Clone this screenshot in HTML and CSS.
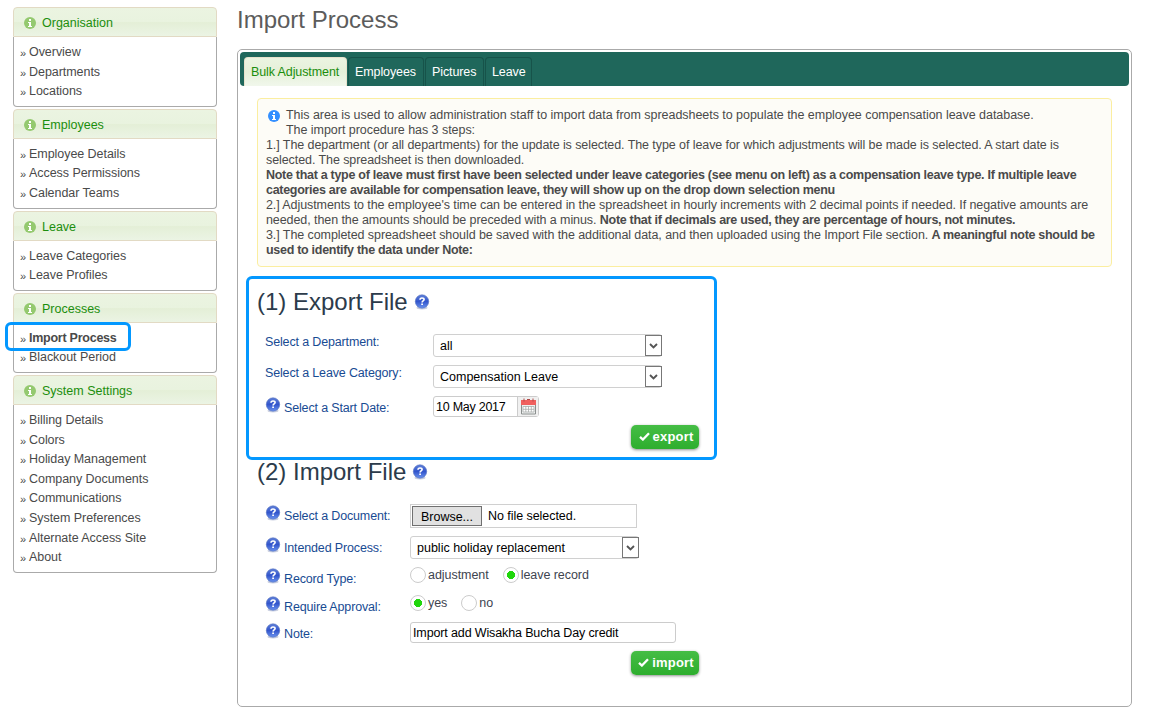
FILE: index.html
```html
<!DOCTYPE html>
<html lang="en">
<head>
  <meta charset="UTF-8">
  <meta name="viewport" content="width=device-width, initial-scale=1.0">
  <title>Import Process</title>
  <link rel="stylesheet" href="styles.css">
</head>
<body>
  <!-- Shared icons -->
  <svg class="sprite" width="0" height="0">
    <defs>
      <linearGradient id="helpFill" x1="0" y1="0" x2="0" y2="1">
        <stop offset="0" stop-color="#5f80d8"/>
        <stop offset="0.5" stop-color="#3255cc"/>
        <stop offset="1" stop-color="#6b93ee"/>
      </linearGradient>
    </defs>
    <symbol id="info" viewBox="0 0 12 12">
      <circle cx="6" cy="6" r="6" fill="currentColor"/>
      <path d="M5 2h2v2H5zM4 5h3v4h1v1H4V9h1V6H4z" fill="#fff"/>
    </symbol>
    <symbol id="help" viewBox="0 0 16 16">
      <ellipse cx="8" cy="13.8" rx="5.5" ry="1.7" fill="#c9cfe0"/>
      <circle cx="8" cy="7.5" r="6.7" fill="url(#helpFill)" stroke="#5470c0" stroke-width=".6"/>
      <path d="M6 5.800C6 4.500 6.900 4 8 4C9.300 4 10.100 4.700 10.100 5.600C10.100 6.900 8.100 7 8.100 8.400" fill="none" stroke="#fff" stroke-width="1.600"/>
      <path d="M7.200 9.400h1.800v1.700H7.200z" fill="#fff"/>
    </symbol>
    <symbol id="check" viewBox="0 0 11 9">
      <path d="M1 4.800L3.900 7.500L10 1.200" fill="none" stroke="#fff" stroke-width="2.300"/>
    </symbol>
    <symbol id="arrow" viewBox="0 0 9 6">
      <path d="M1 1L4.500 4.400L8 1" fill="none" stroke="#555" stroke-width="1.900"/>
    </symbol>
  </svg>

  <aside class="sidebar">
    <div class="menu">
      <h3><svg><use href="#info"/></svg>Organisation</h3>
      <ul>
        <li><a href="#">Overview</a></li>
        <li><a href="#">Departments</a></li>
        <li><a href="#">Locations</a></li>
      </ul>
    </div>
    <div class="menu">
      <h3><svg><use href="#info"/></svg>Employees</h3>
      <ul>
        <li><a href="#">Employee Details</a></li>
        <li><a href="#">Access Permissions</a></li>
        <li><a href="#">Calendar Teams</a></li>
      </ul>
    </div>
    <div class="menu">
      <h3><svg><use href="#info"/></svg>Leave</h3>
      <ul>
        <li><a href="#">Leave Categories</a></li>
        <li><a href="#">Leave Profiles</a></li>
      </ul>
    </div>
    <div class="menu">
      <h3><svg><use href="#info"/></svg>Processes</h3>
      <ul>
        <li class="current"><a href="#">Import Process</a></li>
        <li><a href="#">Blackout Period</a></li>
      </ul>
    </div>
    <div class="menu">
      <h3><svg><use href="#info"/></svg>System Settings</h3>
      <ul>
        <li><a href="#">Billing Details</a></li>
        <li><a href="#">Colors</a></li>
        <li><a href="#">Holiday Management</a></li>
        <li><a href="#">Company Documents</a></li>
        <li><a href="#">Communications</a></li>
        <li><a href="#">System Preferences</a></li>
        <li><a href="#">Alternate Access Site</a></li>
        <li><a href="#">About</a></li>
      </ul>
    </div>
  </aside>

  <main>
    <h1>Import Process</h1>

    <div class="panel">
      <nav class="tabs">
        <a href="#" class="tab active">Bulk Adjustment</a>
        <a href="#" class="tab">Employees</a>
        <a href="#" class="tab">Pictures</a>
        <a href="#" class="tab">Leave</a>
      </nav>

      <div class="note">
        <div class="intro">
          <svg><use href="#info"/></svg>
          <p>This area is used to allow administration staff to import data from spreadsheets to populate the employee compensation leave database.<br>
          The import procedure has 3 steps:</p>
        </div>
        <p>1.] The department (or all departments) for the update is selected. The type of leave for which adjustments will be made is selected. A start date is<br>
        selected. The spreadsheet is then downloaded.<br>
        <b>Note that a type of leave must first have been selected under leave categories (see menu on left) as a compensation leave type. If multiple leave<br>
        categories are available for compensation leave, they will show up on the drop down selection menu</b><br>
        2.] Adjustments to the employee's time can be entered in the spreadsheet in hourly increments with 2 decimal points if needed. If negative amounts are<br>
        needed, then the amounts should be preceded with a minus. <b>Note that if decimals are used, they are percentage of hours, not minutes.</b><br>
        3.] The completed spreadsheet should be saved with the additional data, and then uploaded using the Import File section. <b>A meaningful note should be<br>
        used to identify the data under Note:</b></p>
      </div>

      <section class="export">
        <h2>(1) Export File <svg><use href="#help"/></svg></h2>
        <div class="row">
          <label>Select a Department:</label>
          <div class="select"><select><option>all</option></select><span><svg><use href="#arrow"/></svg></span></div>
        </div>
        <div class="row">
          <label>Select a Leave Category:</label>
          <div class="select"><select><option>Compensation Leave</option></select><span><svg><use href="#arrow"/></svg></span></div>
        </div>
        <div class="row date-row">
          <label class="with-help"><svg><use href="#help"/></svg>Select a Start Date:</label>
          <div class="date">
            <input type="text" value="10 May 2017">
            <button type="button">
              <svg viewBox="0 0 15 17">
                <path d="M.5 3h14v13H.5z" fill="#eef1f0" stroke="#8b8f8e"/>
                <path d="M0 2h15v5H0z" fill="#f0605e"/>
                <path d="M3 .5v3M6 1.500h3M12 .5v3" stroke="#b04a48" fill="none"/>
                <path d="M2 8.500h11v5.500H2z" fill="#fff" stroke="#a9adac" stroke-width=".8"/>
                <path d="M4.800 8v6M7.500 8v6M10.300 8v6M2 11.300h11" stroke="#a9adac" stroke-width=".8"/>
              </svg>
            </button>
          </div>
        </div>
        <div class="actions"><button type="button" class="btn"><svg><use href="#check"/></svg>export</button></div>
      </section>

      <section class="import">
        <h2>(2) Import File <svg><use href="#help"/></svg></h2>
        <div class="row">
          <label class="with-help"><svg><use href="#help"/></svg>Select a Document:</label>
          <div class="file"><button type="button">Browse...</button>No file selected.</div>
        </div>
        <div class="row">
          <label class="with-help"><svg><use href="#help"/></svg>Intended Process:</label>
          <div class="select"><select><option>public holiday replacement</option></select><span><svg><use href="#arrow"/></svg></span></div>
        </div>
        <div class="row short">
          <label class="with-help"><svg><use href="#help"/></svg>Record Type:</label>
          <div class="radios">
            <label><input type="radio" name="record">adjustment</label>
            <label><input type="radio" name="record" checked>leave record</label>
          </div>
        </div>
        <div class="row short">
          <label class="with-help"><svg><use href="#help"/></svg>Require Approval:</label>
          <div class="radios">
            <label><input type="radio" name="approval" checked>yes</label>
            <label><input type="radio" name="approval">no</label>
          </div>
        </div>
        <div class="row">
          <label class="with-help"><svg><use href="#help"/></svg>Note:</label>
          <input type="text" class="text" value="Import add Wisakha Bucha Day credit">
        </div>
        <div class="actions"><button type="button" class="btn"><svg><use href="#check"/></svg>import</button></div>
      </section>
    </div>
  </main>
</body>
</html>
```
FILE: styles.css
```css
*, *::before, *::after { margin: 0; padding: 0; box-sizing: border-box; }

body {
  display: flex;
  gap: 20px;
  height: 726px;
  padding: 7px 21px 0 13px;
  overflow: hidden;
  background: #fff;
  color: #4a4a4a;
  font-family: "Liberation Sans", Arial, sans-serif;
  font-size: 12.5px;
}

.sprite { position: absolute; }

svg { display: block; }

a { color: inherit; text-decoration: none; }

ul { list-style: none; }

input, select, button {
  font: inherit;
  color: #000;
}

/* Sidebar */
.sidebar {
  width: 204px;
  flex: none;
}

.menu {
  margin-bottom: 2px;
}

.menu h3 {
  display: flex;
  align-items: center;
  height: 30px;
  padding: 2px 0 0 10px;
  border: 1px solid #e2dac4;
  border-radius: 4px 4px 0 0;
  background: linear-gradient(#ebf4e1 0%, #e9f3df 48%, #e4efd7 52%, #ebf4e4 100%);
  color: #1b8e0d;
  font-size: 12.5px;
  font-weight: normal;
}

.menu h3 svg {
  width: 12px;
  height: 12px;
  margin-right: 6px;
  color: #94c96f;
}

.menu ul {
  padding: 6px 0 5px 6px;
  border: 1px solid #aaa;
  border-top: 0;
  border-radius: 0 0 4px 4px;
}

.menu li {
  position: relative;
  height: 19.6px;
  line-height: 19.6px;
  letter-spacing: -0.05px;
}

.menu li:last-child { margin-bottom: -1px; }

.menu li::before {
  content: "»";
  display: inline-block;
  width: 9px;
  font-size: 11px;
  line-height: 12px;
  vertical-align: -1px;
}

.menu .current {
  font-weight: bold;
  letter-spacing: -0.25px;
}

.menu .current::before { font-weight: normal; }

/* ring around the current page */
.menu .current::after {
  content: "";
  position: absolute;
  left: -15px;
  top: -7px;
  width: 126px;
  height: 29px;
  border: 3px solid #0398ff;
  border-radius: 6px;
}

/* Main area */
main { width: 895px; }

h1 {
  height: 42px;
  line-height: 26px;
  color: #5c5c5c;
  font-size: 24px;
  font-weight: normal;
}

.panel {
  height: 658px;
  padding: 2px;
  border: 1px solid #aaa;
  border-radius: 5px;
}

.tabs {
  display: flex;
  gap: 1px;
  height: 34px;
  padding: 5px 4px 0;
  border-radius: 4px;
  background: #1f675b;
}

.tab {
  height: 29px;
  padding: 0 6px;
  border: 1px solid #17534a;
  border-bottom: 0;
  border-radius: 4px 4px 0 0;
  color: #fff;
  letter-spacing: -0.1px;
  line-height: 28px;
  white-space: nowrap;
}

.tab:nth-child(1) { width: 103px; }
.tab:nth-child(2) { width: 76px; }
.tab:nth-child(3) { width: 59px; }
.tab:nth-child(4) { width: 47px; }

.tab.active {
  border-color: #e8e2cc;
  background: linear-gradient(#ebf4e1, #e6f0d9 50%, #f1f7ec);
  color: #1b8e0d;
}

.note {
  height: 169px;
  margin: 12px 17px 9px;
  padding: 9px 8px 7px;
  border: 1px solid #fbeea0;
  border-radius: 4px;
  background: #fdfcf7;
  letter-spacing: -0.08px;
  line-height: 15px;
  white-space: nowrap;
}

.intro {
  display: flex;
  gap: 6px;
  letter-spacing: -0.04px;
}

.intro svg {
  width: 12px;
  height: 12px;
  margin: 2px 0 0 2px;
  color: #338fff;
}

.note b { letter-spacing: -0.29px; }

/* Forms */
section {
  width: 471px;
  margin-left: 6px;
  border: 3px solid transparent;
}

.export {
  height: 184px;
  border-color: #0398ff;
  border-radius: 6px;
}

.import { border-top: 0; }

h2 {
  display: flex;
  align-items: center;
  gap: 6px;
  height: 52px;
  padding: 0 0 6px 8px;
  color: #2c3b4b;
  font-size: 24px;
  font-weight: normal;
}

.import h2 {
  height: 41px;
  padding-bottom: 17px;
}

h2 svg,
.with-help svg {
  width: 16px;
  height: 16px;
}

.row {
  display: flex;
  height: 31px;
  padding: 3px 0 0 16px;
}

.row > label {
  width: 168px;
  height: 16px;
  color: #184b93;
  letter-spacing: -0.15px;
  line-height: 16px;
}

.import .row { height: 32px; }
.import .row > label { width: 145px; }
.import .row:nth-of-type(2) { height: 31px; }
.import .short { height: 28px; }
.import .row.short + .short { height: 27px; }

.row > .with-help {
  display: flex;
  gap: 3px;
  padding-top: 4px;
}

.with-help svg { margin-top: -3px; }

.select {
  display: flex;
  width: 229px;
  height: 23px;
  border: 1px solid #d0d0d0;
  border-radius: 3px;
}

.select select {
  flex: 1;
  padding-left: 6px;
  border: 0;
  background: none;
  appearance: none;
}

.select span {
  display: flex;
  align-items: center;
  justify-content: center;
  width: 17px;
  height: 21px;
  margin-right: -1px;
  border: 1px solid #777;
}

.select span svg {
  width: 9px;
  height: 6px;
}

.date {
  display: flex;
  width: 106px;
  height: 21px;
  border: 1px solid #ccc;
  border-radius: 3px;
}

.date input {
  width: 83px;
  padding-left: 2px;
  border: 0;
  background: none;
  letter-spacing: -0.25px;
}

.date button {
  display: flex;
  flex: 1;
  align-items: center;
  justify-content: center;
  border: 0;
  border-left: 1px solid #ccc;
  background: #f0f0f0;
}

.date button svg {
  width: 15px;
  height: 17px;
}

.file {
  display: flex;
  align-items: center;
  gap: 6px;
  width: 227px;
  height: 24px;
  padding: 1px;
  border: 1px solid #d0d0d0;
  color: #000;
  letter-spacing: -0.05px;
  line-height: 20px;
}

.file button {
  width: 70px;
  height: 20px;
  border: 1px solid #707070;
  background: #e1e1e1;
}

.radios {
  display: flex;
  gap: 14px;
  height: 16px;
  color: #40444f;
  letter-spacing: -0.05px;
}

.radios label {
  display: flex;
  align-items: center;
  gap: 2px;
}

.radios input {
  width: 16px;
  height: 16px;
  border: 1px solid #ccc;
  border-radius: 50%;
  appearance: none;
}

.radios input:checked {
  background: radial-gradient(circle, #21d60c 3.8px, #fff 4.3px);
}

.text {
  width: 266px;
  height: 21px;
  padding-left: 2px;
  border: 1px solid #ccc;
  border-radius: 3px;
  letter-spacing: -0.13px;
}

.actions {
  display: flex;
  justify-content: flex-end;
  padding: 1px 15px 0 0;
}

.import .actions { padding-top: 0; }

.btn {
  display: flex;
  align-items: center;
  justify-content: center;
  gap: 3px;
  width: 68px;
  height: 24px;
  padding: 0 0 2px 2px;
  border: 0;
  border-radius: 5px;
  background: linear-gradient(#45bd45, #2eae2e);
  box-shadow: 0 1px 3px rgba(0, 0, 0, 0.45);
  color: #fff;
  font-size: 13px;
  font-weight: bold;
  letter-spacing: 0.2px;
}

.btn svg {
  width: 11px;
  height: 9px;
  margin-top: 1px;
}
```
